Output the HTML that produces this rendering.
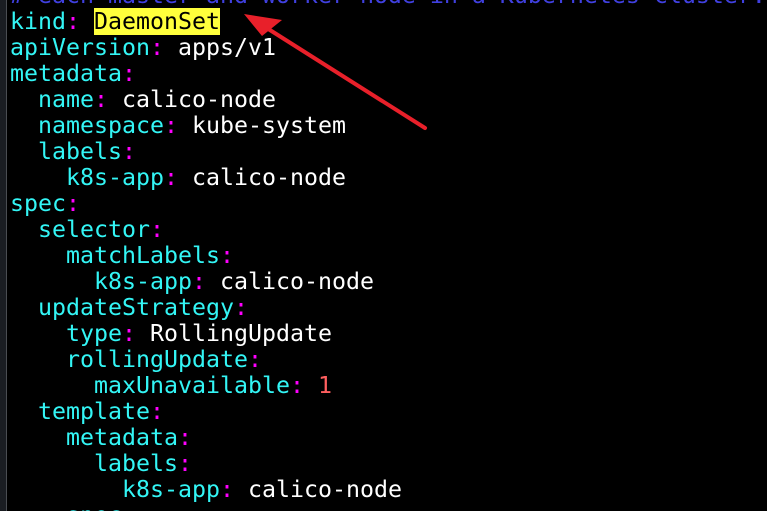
<!DOCTYPE html>
<html><head><meta charset="utf-8"><style>
html,body{margin:0;padding:0;background:#000;width:767px;height:511px;overflow:hidden;position:relative}
.bar{position:absolute;left:0;top:0;width:6px;height:511px;background:#1a1d22;border-right:1px solid #4a4d52}
pre{position:absolute;left:10px;top:-17px;margin:0;font-family:"DejaVu Sans Mono","Liberation Mono",monospace;font-size:23.25px;line-height:26px;color:#fff}
.k{color:#33f5f5}.c{color:#f0f}.n{color:#ff5f5f}.cm{color:#4040e0}
.hl{background:#ffff3c;color:#000}
svg{position:absolute;left:0;top:0}
</style></head><body>
<div class="bar"></div>
<pre><span class="cm"># each master and worker node in a Kubernetes cluster.</span>
<span class="k">kind</span><span class="c">:</span> <span class="hl">DaemonSet</span>
<span class="k">apiVersion</span><span class="c">:</span> apps/v1
<span class="k">metadata</span><span class="c">:</span>
  <span class="k">name</span><span class="c">:</span> calico-node
  <span class="k">namespace</span><span class="c">:</span> kube-system
  <span class="k">labels</span><span class="c">:</span>
    <span class="k">k8s-app</span><span class="c">:</span> calico-node
<span class="k">spec</span><span class="c">:</span>
  <span class="k">selector</span><span class="c">:</span>
    <span class="k">matchLabels</span><span class="c">:</span>
      <span class="k">k8s-app</span><span class="c">:</span> calico-node
  <span class="k">updateStrategy</span><span class="c">:</span>
    <span class="k">type</span><span class="c">:</span> RollingUpdate
    <span class="k">rollingUpdate</span><span class="c">:</span>
      <span class="k">maxUnavailable</span><span class="c">:</span> <span class="n">1</span>
  <span class="k">template</span><span class="c">:</span>
    <span class="k">metadata</span><span class="c">:</span>
      <span class="k">labels</span><span class="c">:</span>
        <span class="k">k8s-app</span><span class="c">:</span> calico-node
    <span class="k">spec</span><span class="c">:</span></pre>
<svg width="767" height="511">
<line x1="425" y1="128" x2="262" y2="25" stroke="#e8202a" stroke-width="4" stroke-linecap="round"/>
<polygon points="244,14 282,20 262,36" fill="#e8202a"/>
</svg>
</body></html>
